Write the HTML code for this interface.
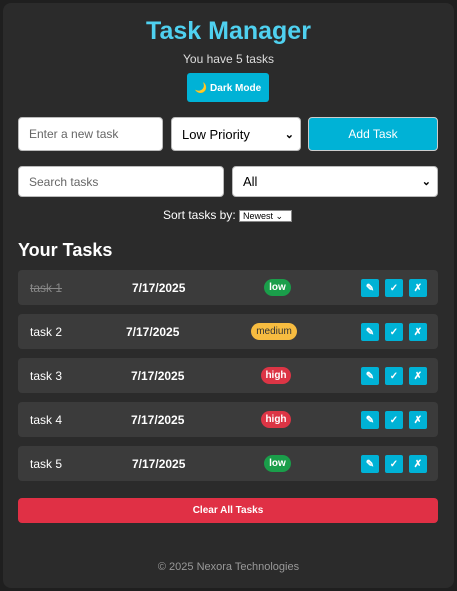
<!DOCTYPE html>
<html><head><style>
*{box-sizing:border-box;margin:0;padding:0}
body{width:457px;height:591px;background:#1f1f1f;font-family:"Liberation Sans",Arial,sans-serif;position:relative;overflow:hidden}
.c{position:absolute;left:3px;top:3px;width:451px;height:585px;background:#2b2b2b;border-radius:8px}
.a{position:absolute}
h1{position:absolute;left:0;width:457px;top:17px;text-align:center;color:#4fd1f0;font-size:25px;font-weight:bold}
.in{background:#fff;border:1px solid #bbb;border-radius:4px;font-size:12px;color:#666;padding-left:10px;display:flex;align-items:center}
.sel{color:#000;font-size:13px}
.row{position:absolute;left:18px;width:420px;height:35px;background:#3b3b3b;border-radius:4px;color:#fff;font-size:12px}
.row span{position:absolute;top:11px}
.row span.d{font-weight:bold}
.b{position:absolute;top:9px;width:18px;height:18px;background:#00b2d6;border-radius:2px;color:#fff;font-size:10px;display:flex;align-items:center;justify-content:center;font-weight:bold}
.badge{position:absolute;top:9px;height:17px;border-radius:9px;font-size:10px;display:flex;align-items:center;justify-content:center;font-weight:bold}
.low{background:#1a9e4a;color:#fff}.high{background:#dc3545;color:#fff}.med{background:#f7bc40;color:#333;font-weight:normal}
</style></head><body>
<div class="c"></div>
<h1>Task Manager</h1>
<div class="a" style="left:0;width:457px;top:52px;text-align:center;color:#ddd;font-size:12px">You have 5 tasks</div>
<div class="a" style="left:187px;top:73px;width:82px;height:29px;background:#00b2d6;border-radius:3px;color:#fff;font-size:10px;font-weight:bold;display:flex;align-items:center;justify-content:center;padding-top:2px">🌙 Dark Mode</div>
<div class="a in" style="left:18px;top:117px;width:145px;height:34px">Enter a new task</div>
<div class="a in sel" style="left:171px;top:117px;width:130px;height:34px">Low Priority<span style="position:absolute;right:6px;font-size:11px;font-weight:bold">⌄</span></div>
<div class="a" style="left:308px;top:117px;width:130px;height:34px;background:#00b2d6;border:1px solid #ccc;border-radius:4px;color:#fff;font-size:12px;display:flex;align-items:center;justify-content:center">Add Task</div>
<div class="a in" style="left:18px;top:166px;width:206px;height:31px">Search tasks</div>
<div class="a in sel" style="left:232px;top:166px;width:206px;height:31px">All<span style="position:absolute;right:6px;font-size:11px;font-weight:bold">⌄</span></div>
<div class="a" style="left:163px;top:208px;color:#fff;font-size:12px">Sort tasks by: <span style="display:inline-block;background:#fff;color:#000;font-size:9px;border:1px solid #888;padding:0 3px;height:12px;line-height:11px;width:53px;vertical-align:middle">Newest ⌄</span></div>
<div class="a" style="left:18px;top:240px;color:#fff;font-size:18px;font-weight:bold">Your Tasks</div>

<div class="row" style="top:270px"><span style="left:12px;color:#888;text-decoration:line-through">task 1</span><span class="d" style="left:114px">7/17/2025</span><div class="badge low" style="left:246px;width:27px">low</div><div class="b" style="left:343px">✎</div><div class="b" style="left:367px">✓</div><div class="b" style="left:391px">✗</div></div>
<div class="row" style="top:314px"><span style="left:12px">task 2</span><span class="d" style="left:108px">7/17/2025</span><div class="badge med" style="left:233px;width:46px">medium</div><div class="b" style="left:343px">✎</div><div class="b" style="left:367px">✓</div><div class="b" style="left:391px">✗</div></div>
<div class="row" style="top:358px"><span style="left:12px">task 3</span><span class="d" style="left:113px">7/17/2025</span><div class="badge high" style="left:243px;width:30px">high</div><div class="b" style="left:343px">✎</div><div class="b" style="left:367px">✓</div><div class="b" style="left:391px">✗</div></div>
<div class="row" style="top:402px"><span style="left:12px">task 4</span><span class="d" style="left:113px">7/17/2025</span><div class="badge high" style="left:243px;width:30px">high</div><div class="b" style="left:343px">✎</div><div class="b" style="left:367px">✓</div><div class="b" style="left:391px">✗</div></div>
<div class="row" style="top:446px"><span style="left:12px">task 5</span><span class="d" style="left:114px">7/17/2025</span><div class="badge low" style="left:246px;width:27px">low</div><div class="b" style="left:343px">✎</div><div class="b" style="left:367px">✓</div><div class="b" style="left:391px">✗</div></div>

<div class="a" style="left:18px;top:498px;width:420px;height:25px;background:#e03045;border-radius:4px;color:#fff;font-size:10px;font-weight:bold;display:flex;align-items:center;justify-content:center">Clear All Tasks</div>
<div class="a" style="left:0;width:457px;top:561px;text-align:center;color:#999;font-size:11px">© 2025 Nexora Technologies</div>
</body></html>
